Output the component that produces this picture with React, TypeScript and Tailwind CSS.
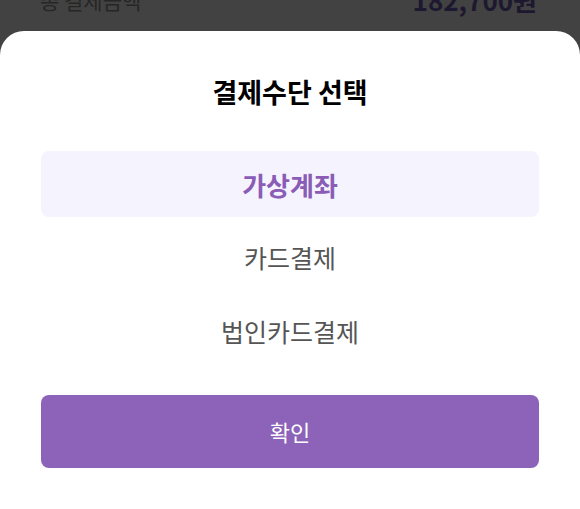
import { useState } from "react";

const methods = ["가상계좌", "카드결제", "법인카드결제"];

export default function App() {
  const [selected, setSelected] = useState(0);

  return (
    <div
      className="relative h-[509px] w-full overflow-hidden bg-[#424242] flex flex-col"
      style={{ fontFamily: '"Noto Sans CJK KR", "Noto Sans", sans-serif' }}
    >
      {/* page behind the dimmed overlay */}
      <div className="h-[31px] shrink-0 overflow-hidden">
        <div className="-mt-[17px] flex h-[34px] items-center justify-between pl-[40px] pr-[43px]">
          <span className="text-[21px] leading-[30px] text-[#262626]">총 결제금액</span>
          <span className="text-[26px] font-bold leading-[34px] text-[#1d1830]">182,700원</span>
        </div>
      </div>

      {/* bottom sheet */}
      <div className="flex flex-1 flex-col rounded-t-[24px] bg-white px-[41px] pt-[43px]">
        <h2 className="text-center text-[27px] font-bold leading-[36px] text-black">
          결제수단 선택
        </h2>
        <ul className="mt-[41px] flex flex-col gap-[8px]">
          {methods.map((m, i) => (
            <li key={m}>
              <button
                onClick={() => setSelected(i)}
                className={
                  i === selected
                    ? "flex h-[66px] w-full items-center justify-center rounded-[8px] bg-[#f5f3fe] text-[26px] font-bold text-[#8a5cb6]"
                    : "flex h-[66px] w-full items-center justify-center rounded-[8px] text-[25px] text-[#555555]"
                }
              >
                {m}
              </button>
            </li>
          ))}
        </ul>
        <button className="mt-[30px] flex h-[73px] w-full items-center justify-center rounded-[8px] bg-[#8c63b9] text-[22px] text-white">
          확인
        </button>
      </div>
    </div>
  );
}
